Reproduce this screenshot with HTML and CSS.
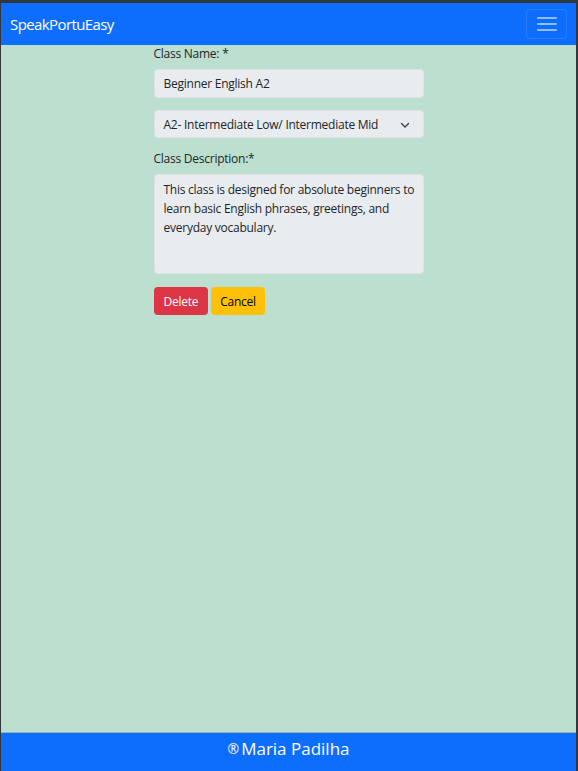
FILE: index.html
```html
<!DOCTYPE html>
<html lang="en">
<head>
<meta charset="utf-8">
<title>SpeakPortuEasy</title>
<link rel="stylesheet" href="styles.css">
</head>
<body>
<div class="frame">
  <nav class="navbar">
    <span class="brand">SpeakPortuEasy</span>
    <button class="toggler" type="button" aria-label="Toggle navigation">
      <svg width="20" height="16" viewBox="0 0 20 16"><path d="M1 2h18M1 8h18M1 14h18" stroke="rgba(255,255,255,0.55)" stroke-width="2" stroke-linecap="round"/></svg>
    </button>
  </nav>
  <main class="main">
    <form class="form">
      <label class="label">Class Name: *</label>
      <div class="input">Beginner English A2</div>
      <div class="input select">
        <span>A2- Intermediate Low/ Intermediate Mid</span>
        <svg class="chev" width="10" height="8" viewBox="0 0 10 8"><path d="M1.5 2.5L5 6l3.5-3.5" fill="none" stroke="#343a40" stroke-width="1.3" stroke-linecap="round" stroke-linejoin="round"/></svg>
      </div>
      <label class="label">Class Description:*</label>
      <div class="input textarea">This class is designed for absolute beginners to learn basic English phrases, greetings, and everyday vocabulary.</div>
      <div class="buttons">
        <button class="btn btn-danger" type="button">Delete</button>
        <button class="btn btn-warning" type="button">Cancel</button>
      </div>
    </form>
  </main>
  <footer class="footer"><span class="reg">®</span>Maria Padilha</footer>
</div>
</body>
</html>
```
FILE: styles.css
```css
html, body {
  margin: 0;
  padding: 0;
  height: 100%;
}
body {
  background: #33363b;
  font-family: "Open Sans", "Noto Sans", sans-serif;
  color: #212529;
}
.frame {
  box-sizing: border-box;
  height: 100%;
  margin: 0 2px 0 1px;
  padding-top: 3px;
  display: flex;
  flex-direction: column;
}
.navbar {
  background: #0d6efd;
  height: 42px;
  display: flex;
  align-items: center;
  justify-content: space-between;
  padding: 0 9px 0 9px;
  flex-shrink: 0;
}
.brand {
  color: #fff;
  font-size: 15px;
  letter-spacing: -0.6px;
}
.toggler {
  width: 41px;
  height: 30px;
  border: 1px solid rgba(255,255,255,0.1);
  border-radius: 4px;
  background: transparent;
  display: flex;
  align-items: center;
  justify-content: center;
  padding: 0;
}
.main {
  flex: 1;
  background: #bcdfcf;
}
.form {
  width: 270px;
  margin: 0 auto;
  display: flex;
  flex-direction: column;
  letter-spacing: -0.25px;
}
.label {
  font-size: 12px;
  line-height: 18px;
  margin-bottom: 6px;
  color: #212529;
}
.input {
  box-sizing: border-box;
  background: #e9ecef;
  border: 1px solid #dee2e6;
  border-radius: 4px;
  height: 29px;
  padding: 0 9px;
  font-size: 12px;
  line-height: 27px;
  color: #212529;
  margin-bottom: 12px;
}
.select {
  display: flex;
  align-items: center;
  justify-content: space-between;
  padding-right: 13px;
  height: 28px;
  margin-bottom: 12px;
}
.chev {
  margin-top: 1px;
}
.textarea {
  height: 100px;
  line-height: 19px;
  padding: 5px 8px 0 9px;
  margin-bottom: 13px;
}
.buttons {
  display: flex;
  gap: 3px;
}
.btn {
  font-family: inherit;
  letter-spacing: inherit;
  font-size: 12px;
  height: 28px;
  border-radius: 4px;
  border: 1px solid transparent;
  padding: 0 9px;
  cursor: pointer;
}
.btn-warning {
  padding: 0 8px;
}
.btn-danger {
  background: #dc3545;
  color: #fff;
}
.btn-warning {
  background: #ffc107;
  color: #000;
}
.footer {
  flex-shrink: 0;
  background: #0d6efd;
  border-top: 1px solid #8fb3c9;
  color: #fff;
  font-size: 17px;
  display: flex;
  align-items: center;
  justify-content: center;
  padding-bottom: 8px;
  height: 30px;
}
.reg {
  font-size: 14px;
  margin-right: 2px;
}
```
